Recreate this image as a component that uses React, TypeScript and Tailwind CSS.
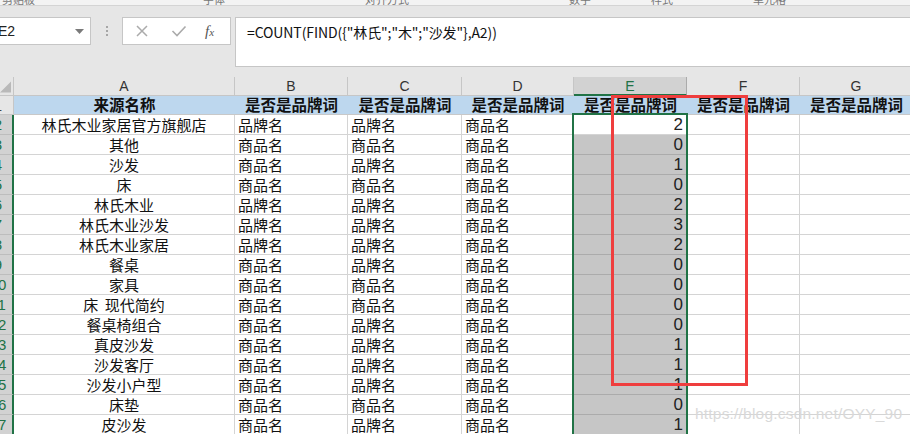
import React from 'react'

type Row = { name: string; b: string; c: string; d: string; e: number }

const rows: Row[] = [
  { name: '林氏木业家居官方旗舰店', b: '品牌名', c: '品牌名', d: '商品名', e: 2 },
  { name: '其他', b: '商品名', c: '商品名', d: '商品名', e: 0 },
  { name: '沙发', b: '商品名', c: '品牌名', d: '商品名', e: 1 },
  { name: '床', b: '商品名', c: '商品名', d: '商品名', e: 0 },
  { name: '林氏木业', b: '品牌名', c: '品牌名', d: '商品名', e: 2 },
  { name: '林氏木业沙发', b: '品牌名', c: '品牌名', d: '商品名', e: 3 },
  { name: '林氏木业家居', b: '品牌名', c: '品牌名', d: '商品名', e: 2 },
  { name: '餐桌', b: '商品名', c: '品牌名', d: '商品名', e: 0 },
  { name: '家具', b: '商品名', c: '商品名', d: '商品名', e: 0 },
  { name: '床  现代简约', b: '商品名', c: '商品名', d: '商品名', e: 0 },
  { name: '餐桌椅组合', b: '商品名', c: '品牌名', d: '商品名', e: 0 },
  { name: '真皮沙发', b: '商品名', c: '品牌名', d: '商品名', e: 1 },
  { name: '沙发客厅', b: '商品名', c: '品牌名', d: '商品名', e: 1 },
  { name: '沙发小户型', b: '商品名', c: '品牌名', d: '商品名', e: 1 },
  { name: '床垫', b: '商品名', c: '商品名', d: '商品名', e: 0 },
  { name: '皮沙发', b: '商品名', c: '品牌名', d: '商品名', e: 1 },
]

const formula = '=COUNT(FIND({"林氏";"木";"沙发"},A2))'

// column template: row header, A..G
const gridCols = 'grid grid-cols-[14px_221px_113px_114px_112px_113px_113px_113px]'
const cjk = "font-['Noto_Sans_CJK_SC',sans-serif]"
const letters = ['A', 'B', 'C', 'D', 'E', 'F', 'G']

function RowNum({ n, selected }: { n: number; selected: boolean }) {
  return (
    <div
      className={`overflow-hidden flex items-center border-b ${
        selected
          ? 'bg-[#d2d2d2] border-r-2 border-r-[#217346] border-b-[#bdbdbd] text-[#217346]'
          : 'bg-[#e6e6e6] border-r border-r-[#c6c6c6] border-b-[#c6c6c6] text-[#444]'
      }`}
    >
      <div className="ml-[-15px] w-[26px] shrink-0 text-center font-['Liberation_Sans',sans-serif] text-[15px] leading-none">
        {n}
      </div>
    </div>
  )
}

export default function App() {
  return (
    <div className="relative w-[910px] h-[434px] overflow-hidden bg-white">
      {/* ribbon tail */}
      <div className="h-[6px] bg-[#f3f3f3] border-b border-[#d4d4d4] overflow-hidden relative">
        <div className="flex mt-[-9px] text-[11px] text-[#777] font-['Noto_Sans_CJK_SC',sans-serif] whitespace-nowrap">
          <span className="ml-[2px]">剪贴板</span>
          <span className="ml-[168px]">字体</span>
          <span className="ml-[140px]">对齐方式</span>
          <span className="ml-[160px]">数字</span>
          <span className="ml-[60px]">样式</span>
          <span className="ml-[80px]">单元格</span>
        </div>
      </div>

      {/* formula bar */}
      <div className="h-[71px] bg-[#e6e6e6] flex items-start pt-[11px]">
        <div className="w-[91px] h-[28px] bg-white border border-l-0 border-[#c6c6c6] flex items-center justify-between">
          <span className="ml-[-2px] font-['Liberation_Sans',sans-serif] text-[14px] text-[#222]">E2</span>
          <svg width="9" height="5" viewBox="0 0 9 5" className="mr-[6px]">
            <path d="M0 0 H9 L4.5 5 Z" fill="#7a7a7a" />
          </svg>
        </div>
        <div className="w-[31px] h-[28px] flex flex-col items-center justify-center gap-[2px]">
          <span className="w-[2px] h-[2px] bg-[#a6a6a6]" />
          <span className="w-[2px] h-[2px] bg-[#a6a6a6]" />
          <span className="w-[2px] h-[2px] bg-[#a6a6a6]" />
        </div>
        <div className="w-[109px] h-[28px] bg-white border border-[#c6c6c6] flex items-center pl-[12px]">
          <svg width="14" height="14" viewBox="0 0 14 14">
            <path d="M2 2 L12 12 M12 2 L2 12" stroke="#ababab" strokeWidth="1.5" />
          </svg>
          <svg width="16" height="14" viewBox="0 0 16 14" className="ml-[22px]">
            <path d="M1.5 7 L6 11.5 L14.5 2.5" stroke="#ababab" strokeWidth="1.6" fill="none" />
          </svg>
          <span className="ml-[18px] font-['Liberation_Serif',serif] italic text-[15px] text-[#555]">
            f<span className="text-[11px]">x</span>
          </span>
        </div>
        <div className="ml-[4px] flex-1 h-[50px] bg-white border border-r-0 border-[#c6c6c6] pl-[11px] pt-[6px] leading-none">
          <span className={`${cjk} text-[14px] text-[#111] tracking-[-0.1px]`}>{formula}</span>
        </div>
      </div>

      {/* sheet */}
      <div className={`${gridCols} h-[19px] bg-[#e6e6e6] leading-none`}>
        <div className="border-r border-b border-[#c6c6c6] flex items-end justify-end pr-[2px] pb-[2px]">
          <svg width="12" height="12" viewBox="0 0 12 12">
            <path d="M12 0 V12 H0 Z" fill="#b9b9b9" />
          </svg>
        </div>
        {letters.map(l => (
          <div
            key={l}
            className={`flex items-center justify-center font-['Liberation_Sans',sans-serif] text-[14px] ${
              l === 'E'
                ? 'bg-[#d2d2d2] border-b-2 border-b-[#217346] border-r border-r-[#ababab] text-[#217346]'
                : 'border-r border-r-[#c6c6c6] border-b border-b-[#c6c6c6] text-[#333]'
            }`}
          >
            {l}
          </div>
        ))}
      </div>

      <div className={`${gridCols} h-[19px] leading-none`}>
        <RowNum n={1} selected={false} />
        <div className={`col-span-7 grid grid-cols-[221px_113px_114px_112px_113px_113px_113px] bg-[#bdd7ee] border-b border-[#c8c8c8] ${cjk} font-bold text-[15.5px] text-[#111]`}>
          <div className="flex items-center justify-center">来源名称</div>
          {['B', 'C', 'D', 'E', 'F', 'G'].map(k => (
            <div key={k} className="flex items-center justify-center whitespace-nowrap">是否是品牌词</div>
          ))}
        </div>
      </div>

      {rows.map((r, i) => (
        <div key={i} className={`${gridCols} h-[20px] leading-none ${cjk} text-[15px] text-[#111]`}>
          <RowNum n={i + 2} selected />
          <div className="flex items-center justify-center border-r border-b border-[#d4d4d4] whitespace-pre">{r.name}</div>
          <div className="flex items-center pl-[3px] border-r border-b border-[#d4d4d4]">{r.b}</div>
          <div className="flex items-center pl-[3px] border-r border-b border-[#d4d4d4]">{r.c}</div>
          <div className="flex items-center pl-[3px] border-r border-b border-[#d4d4d4]">{r.d}</div>
          <div
            className={`flex items-center justify-end pr-[4px] border-b font-['Liberation_Sans',sans-serif] text-[17px] text-[#222] ${
              i === 0 ? 'bg-white border-b-[#d4d4d4]' : 'bg-[#c6c6c6] border-b-[#ababab]'
            }`}
          >
            {r.e}
          </div>
          <div className="border-r border-b border-[#d4d4d4]" />
          <div className="border-b border-[#d4d4d4]" />
        </div>
      ))}

      {/* selection outline E2:E17 */}
      <div className="absolute left-[572px] top-[113px] w-[116px] h-[340px] border-2 border-[#217346] pointer-events-none" />

      {/* annotation */}
      <div className="absolute left-[611px] top-[95px] w-[137px] h-[291px] border-[3px] border-[#ef3e3e] pointer-events-none" />

      {/* watermark */}
      <div className="absolute left-[695px] top-[402px] font-['Liberation_Sans',sans-serif] text-[15.5px] tracking-[0.2px] text-[#d9d9d9] pointer-events-none">
        https://blog.csdn.net/OYY_90
      </div>
    </div>
  )
}
